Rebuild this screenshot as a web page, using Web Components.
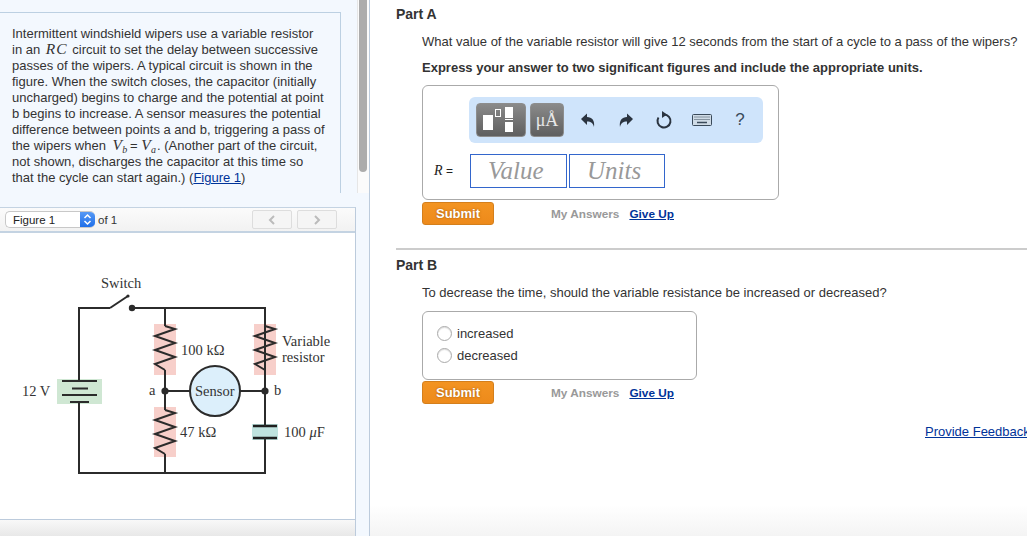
<!DOCTYPE html>
<html><head><meta charset="utf-8"><title>Part A</title>
<style>
html,body{margin:0;padding:0;height:536px;overflow:hidden;background:#fff;font-family:"Liberation Sans",Arial,sans-serif;font-size:13px;color:#333}
.x{font-weight:bold}
</style></head><body>
<mp-app>
  <mp-left slot="left">
    <mp-problem>Intermittent windshield wipers use a variable resistor in an <mp-math>RC</mp-math> circuit to set the delay between successive passes of the wipers. A typical circuit is shown in the figure. When the switch closes, the capacitor (initially uncharged) begins to charge and the potential at point b begins to increase. A sensor measures the potential difference between points a and b, triggering a pass of the wipers when <mp-math style="--m:0 -1px 0 3px;--ls:.3px">V<sub>b</sub></mp-math> = <mp-math style="--m:0 1px 0 0;--ls:.3px">V<sub>a</sub></mp-math>. (Another part of the circuit, not shown, discharges the capacitor at this time so that the cycle can start again.) (<a href="#">Figure 1</a>)</mp-problem>
    <mp-figure></mp-figure>
  </mp-left>
  <mp-part title="Part A" question="What value of the variable resistor will give 12 seconds from the start of a cycle to a pass of the wipers?">
    <b class="x" slot="instruction">Express your answer to two significant figures and include the appropriate units.</b>
    <mp-answer-box slot="answer" style="height:113px;width:355px">
      <mp-toolbar></mp-toolbar>
      <mp-unit-input></mp-unit-input>
    </mp-answer-box>
  </mp-part>
  <mp-part title="Part B" question="To decrease the time, should the variable resistance be increased or decreased?" second>
    <mp-answer-box slot="answer" style="height:67px;width:273px;--pad:10px">
      <mp-radio>increased</mp-radio>
      <mp-radio>decreased</mp-radio>
    </mp-answer-box>
  </mp-part>
  <mp-feedback>Provide Feedback</mp-feedback>
</mp-app>
<script>
function def(name, html){
  customElements.define(name, class extends HTMLElement{
    constructor(){super();this.attachShadow({mode:'open'}).innerHTML=typeof html==='function'?'':html;}
    connectedCallback(){ if(typeof html==='function'){this.shadowRoot.innerHTML=html(this);} }
  });
}
def('mp-app',`<style>
:host{display:flex;width:1027px;height:536px;overflow:hidden;background:linear-gradient(#fff 0,#fff 505px,#f4f4f4 536px)}
.left{flex:none;width:370px}
.right{flex:1;min-width:0;padding-left:26px;overflow:hidden;display:flex;flex-direction:column}
</style><div class="left"><slot name="left"></slot></div><div class="right"><slot></slot></div>`);
def('mp-left',`<style>
:host{display:flex;flex-direction:column;height:536px;box-sizing:border-box;width:370px;background:#f3f8fe;border-right:1px solid #bccbdc}
</style><slot></slot>`);
def('mp-problem',`<style>
:host{display:flex;height:193px;overflow:hidden;flex:none;font-size:13px;line-height:16px;color:#333}
.box{width:341px;box-sizing:border-box;margin-top:12px;height:200px;border-top:1px solid #bcd0e2;border-right:1px solid #bcd0e2;padding:13px 14px 0 12px}
.track{margin-left:16px;width:12px;background:#fbfbfb;border-left:1px solid #e6e6e6;box-sizing:border-box;padding:0 1px}
.thumb{width:8px;height:172px;background:#acacac;border-radius:0 0 4px 4px}
::slotted(a){color:#003399;text-decoration:underline}
</style><div class="box"><slot></slot></div><div class="track"><div class="thumb"></div></div>`);
def('mp-math',`<style>
:host{font-family:"Liberation Serif",serif;font-style:italic;font-size:15.500px;line-height:0;letter-spacing:var(--ls,1px);margin:var(--m,0 1px 0 2px)}
::slotted(sub){font-size:10px;line-height:0;vertical-align:-3px;letter-spacing:0}
</style><slot></slot>`);
def('mp-circuit',`<style>:host{display:block;height:286px}svg{display:block}
text{font-family:"Liberation Serif",serif;font-size:14.500px;fill:#333}
.w{stroke:#2b2b2b;stroke-width:2;fill:none}
</style>
<svg width="355" height="286" viewBox="0 233 355 286" xmlns="http://www.w3.org/2000/svg">
<defs><path id="z" class="w" d="M0 0L10 3L-10 10L10 17L-10 24L10 31L-10 38L0 44"/></defs>
<rect x="57" y="379" width="45" height="25" fill="#cfe7d3"/>
<rect x="154" y="324" width="22" height="51" fill="#f7cfca"/>
<rect x="154" y="407" width="22" height="50" fill="#f7cfca"/>
<rect x="254" y="324" width="22" height="51" fill="#f7cfca"/>
<rect x="252" y="424" width="26" height="16" fill="#bfe3df"/>
<path class="w" d="M110 308H79V380M79 402V473H265V440M265 426V308H132M165 308V326M165 370V410M165 454V473"/>
<path class="w" d="M165 391H190M240 391H265V426"/>
<path class="w" d="M110 308L128 296"/>
<circle cx="128" cy="296" r="1.600" fill="#2b2b2b"/>
<circle cx="132" cy="308" r="3.200" fill="#2b2b2b"/>
<circle cx="165" cy="391" r="3.600" fill="#2b2b2b"/>
<circle cx="265" cy="391" r="3.600" fill="#2b2b2b"/>
<use href="#z" x="165" y="326"/>
<use href="#z" x="165" y="410"/>
<use href="#z" x="265" y="326"/>
<path class="w" d="M62 381H97M72 388.500H88M62 395H97M70 402H89"/>
<path d="M253 426H277M253 438H277" stroke="#1f1f1f" stroke-width="2.400"/>
<path d="M265 424V426M265 438V441" stroke="#2b2b2b" stroke-width="2"/>
<circle cx="215" cy="391" r="25" fill="#dceffb" stroke="#2b2b2b" stroke-width="2"/>
<text x="101" y="288">Switch</text>
<text x="22" y="396">12 V</text>
<text x="149" y="395">a</text>
<text x="274" y="395">b</text>
<text x="181" y="355">100 kΩ</text>
<text x="180" y="437">47 kΩ</text>
<text x="195" y="396">Sensor</text>
<text x="282" y="346">Variable</text>
<text x="282" y="362">resistor</text>
<text x="284" y="437">100 <tspan font-style="italic">μ</tspan>F</text>
</svg>`);
def('mp-figure',`<style>
:host{display:block;flex:none;width:356px;margin-top:14px;box-sizing:border-box;background:#fff;border-top:1px solid #c4d3e2;border-right:1px solid #bccbdc}
.bar{display:flex;align-items:center;height:23px;background:linear-gradient(#fbfbfb,#f2f2f2);border-bottom:2px solid #c4d3e2;padding-left:5px;font-size:11.500px;color:#333}
.sel{display:flex;width:90px;height:17px;box-sizing:border-box;border:1px solid #c8c8c8;border-right:0;border-radius:5px;background:#fff;align-items:center;padding-left:7px;overflow:hidden;color:#222;margin-right:3px}
.sel span{flex:1}
.sel i{display:flex;width:15px;height:17px;background:linear-gradient(#5a9cf6,#1b6ce8);align-items:center;justify-content:center}
.of{flex:1}
.nav{width:40px;height:19px;box-sizing:border-box;border:1px solid #ddd;border-radius:2px;background:#f5f5f5;margin-right:5px;display:flex;align-items:center;justify-content:center}
.nav:last-child{margin-right:18px}
.pic{height:286px}
.foot{height:16px;border-top:1px solid #bccbdc;background:linear-gradient(#f8f8f8,#e8e8e8)}
</style>
<div class="bar"><div class="sel"><span>Figure 1</span><i><svg width="9" height="13" viewBox="0 0 9 13"><path d="M1.500 5L4.500 2L7.500 5M1.500 8L4.500 11L7.500 8" fill="none" stroke="#fff" stroke-width="1.500"/></svg></i></div><div class="of">of 1</div>
<div class="nav"><svg width="8" height="10" viewBox="0 0 8 10"><path d="M6 1L2 5L6 9" fill="none" stroke="#bbb" stroke-width="2"/></svg></div>
<div class="nav"><svg width="8" height="10" viewBox="0 0 8 10"><path d="M2 1L6 5L2 9" fill="none" stroke="#bbb" stroke-width="2"/></svg></div></div>
<div class="pic"><mp-circuit></mp-circuit></div><div class="foot"></div>`);
def('mp-part',(el)=>{const second=el.hasAttribute('second');const t=el.getAttribute('title')||'';const q=el.getAttribute('question')||'';
return `<style>
:host{display:block;flex:none;font-size:13px;color:#333}
.sep{height:2px;background:#ccc;margin-top:23px}
h2{margin:0;font-size:14px;line-height:16px;font-weight:bold;color:#333;padding-top:${second?'7':'6'}px}
.body{padding-left:26px}
.q{margin-top:12px;line-height:16px;white-space:nowrap}
.i{margin-top:10px;line-height:16px;font-weight:bold;white-space:nowrap}
.a{margin-top:${second?'10':'9'}px}
.row{display:flex;align-items:center;height:23px;margin-top:${second?'1':'2'}px;font-size:11.800px;font-weight:bold}
.sub{width:70px;height:21px;border:1px solid #d47f1c;border-radius:3px;background:linear-gradient(#f39422,#ed8a1b);color:#fff;font-weight:bold;font-size:13px;text-align:center;line-height:21px;text-shadow:0 0 2px rgba(120,60,0,.7)}
.my{margin-left:57px;color:#999}
.gu{margin-left:10px;color:#003399;text-decoration:underline}
</style>
${second?'<div class="sep"></div>':''}<h2>${t}</h2>
<div class="body"><div class="q">${q}</div>
${second?'':'<div class="i"><slot name="instruction"></slot></div>'}
<div class="a"><slot name="answer"></slot></div>
<div class="row"><div class="sub">Submit</div><div class="my">My Answers</div><div class="gu">Give Up</div></div></div>`});
def('mp-answer-box',`<style>
:host{display:block;border:1px solid #aaa;border-radius:6px;background:#fff}
.in{padding-top:var(--pad,11px);display:flex;flex-direction:column}
</style><div class="in"><slot></slot></div>`);
def('mp-toolbar',`<style>
:host{display:flex;align-items:center;margin-left:46px;width:294px;height:46px;box-sizing:border-box;background:#cfe4fb;border-radius:6px;padding-left:7px;color:#333}
.b{height:34px;border-radius:4px;background:linear-gradient(#8a8a8a,#5f5f5f);box-sizing:border-box;border:1px solid #8d8d8d;display:flex;align-items:center;justify-content:center;color:#e8e8e8;font-family:"Liberation Serif",serif;font-size:18px}
.t{width:50px}.u{width:34px;margin-left:4px}
.ic{display:flex;align-items:center;justify-content:center;width:38px;height:34px}
.q{font-family:"Liberation Sans",sans-serif;font-size:17px;color:#3a4a5a}
</style>
<div class="b t"><svg width="48" height="32" viewBox="0 0 48 32"><rect x="6" y="11" width="10" height="15" fill="#fff"/><rect x="18.500" y="5.500" width="5" height="7" fill="none" stroke="#fff"/><rect x="28" y="3" width="8" height="11" fill="#fff"/><rect x="28" y="15" width="8" height="1" fill="#fff"/><rect x="28" y="18" width="8" height="10" fill="#fff"/></svg></div>
<div class="b u">μÅ</div>
<div class="ic" style="margin-left:5px"><svg width="16" height="16" viewBox="0 0 16 16"><path d="M1 7L7 1.500V5C12 5 15 8.500 14 15C13 11 11 9.500 7 9.500V13Z" fill="#2b3440"/></svg></div>
<div class="ic"><svg width="16" height="16" viewBox="0 0 16 16"><path d="M15 7L9 1.500V5C4 5 1 8.500 2 15C3 11 5 9.500 9 9.500V13Z" fill="#2b3440"/></svg></div>
<div class="ic"><svg width="18" height="20" viewBox="0 0 18 20"><path d="M9 4.500A6.500 6.500 0 1 1 3.500 7.500" fill="none" stroke="#2b3440" stroke-width="2"/><path d="M7 1L12 4.500L7 8Z" fill="#2b3440"/></svg></div>
<div class="ic"><svg width="20" height="12" viewBox="0 0 20 12"><rect x=".5" y=".5" width="19" height="11" rx="1" fill="#cfdbe6" stroke="#3a4a5a"/><path d="M2.500 3H17.500M2.500 5.500H17.500" stroke="#3a4a5a" stroke-dasharray="1 1"/><path d="M5 8.500H15" stroke="#3a4a5a" stroke-width="1.500"/></svg></div>
<div class="ic q">?</div>`);
def('mp-unit-input',`<style>
:host{display:flex;align-items:center;margin-top:11px;height:34px}
.l{width:47px;padding-left:11px;box-sizing:border-box;font-family:"Liberation Serif",serif;font-size:14px;color:#222;white-space:nowrap}
.l span{font-family:"Liberation Sans",sans-serif;font-size:12px}
.f{box-sizing:border-box;height:34px;border:1px solid #3366cc;font-family:"Liberation Serif",serif;font-style:italic;font-size:25px;color:#999;line-height:32px;padding-left:17px}
.v{width:97px;margin-right:2px}.n{width:96px}
</style><div class="l"><i>R</i> <span>=</span></div><div class="f v">Value</div><div class="f n">Units</div>`);
def('mp-radio',`<style>
:host{display:flex;align-items:center;height:22px;margin-left:14px;font-size:13px;color:#333}
i{width:13px;height:13px;border:1px solid #aaa;border-radius:50%;background:#fff;margin-right:5px;box-shadow:inset 0 1px 1px #ddd}
</style><i></i><slot></slot>`);
def('mp-feedback',`<style>
:host{display:block;flex:none;margin-left:529px;margin-top:20px;white-space:nowrap;line-height:16px;color:#003399;text-decoration:underline;font-size:13px}
</style><slot></slot>`);
</script>
</body></html>
